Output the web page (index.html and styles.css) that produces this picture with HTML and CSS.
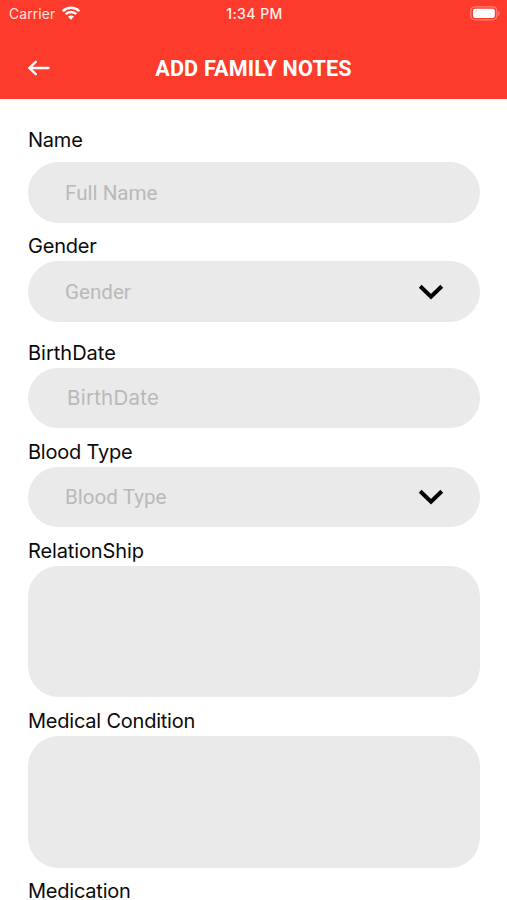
FILE: index.html
```
<!DOCTYPE html>
<html lang="en">
<head>
<meta charset="utf-8">
<title>Add Family Notes</title>
<link rel="stylesheet" href="styles.css">
</head>
<body>
<header class="header">
  <div class="status">
    <div class="carrier"><span class="carrier-name">Carrier</span>
      <svg class="wifi" width="18" height="14" viewBox="0 0 18 14" fill="none" stroke="#fff" stroke-width="2.5"><path d="M.8 5.2C5.3.7 12.7.7 17.2 5.2"/><path d="M3.7 8.2c3-2.9 7.6-2.9 10.6 0"/><path d="M6 10.6c1.8-1.6 4.2-1.6 6 0L9 13.7z" fill="#fff" stroke="none"/></svg>
    </div>
    <time class="time">1:34 PM</time>
    <svg class="battery" width="31" height="15" viewBox="0 0 31 15"><rect x=".8" y=".8" width="26" height="13" rx="4" fill="none" stroke="#ff8078" stroke-width="1.2"/><rect x="3" y="2.7" width="21.8" height="9.2" rx="1.8" fill="#fff"/><path d="M28.3 5v5c1.8-.8 1.8-4.2 0-5z" fill="#ff8a80"/></svg>
  </div>
  <div class="navbar">
    <svg class="back" width="22" height="16" viewBox="0 0 22 16" fill="none" stroke="#fff" stroke-width="2.3" stroke-linecap="round" stroke-linejoin="round"><path d="M20.7 8H1.3M7.8 1.8 1.3 8l6.5 6.2"/></svg>
    <h1 class="title">ADD FAMILY NOTES</h1>
  </div>
</header>
<main class="form">
  <section class="field name-field"><div class="label">Name</div><div class="input"><span class="hint">Full Name</span></div></section>
  <section class="field gender-field"><div class="label">Gender</div><div class="input"><span class="hint">Gender</span><svg class="chevron" width="26" height="18" viewBox="0 0 26 18" fill="none" stroke="#000" stroke-width="4"><path d="M2.2 3.2 13 13.8 23.8 3.2"/></svg></div></section>
  <section class="field"><div class="label l-birth">BirthDate</div><div class="input date"><span class="hint h-birth">BirthDate</span></div></section>
  <section class="field"><div class="label">Blood Type</div><div class="input"><span class="hint">Blood Type</span><svg class="chevron" width="26" height="18" viewBox="0 0 26 18" fill="none" stroke="#000" stroke-width="4"><path d="M2.2 3.2 13 13.8 23.8 3.2"/></svg></div></section>
  <section class="field"><div class="label l-relation">RelationShip</div><div class="input area"></div></section>
  <section class="field"><div class="label">Medical Condition</div><div class="input area"></div></section>
  <section class="last-field"><div class="label">Medication</div></section>
</main>
</body>
</html>
```
FILE: styles.css
```
* { box-sizing: border-box; }
body {
  margin: 0;
  background: #fff;
  color: #0a0a0a;
  font-family: Inter, "Liberation Sans", sans-serif;
}
.header { height: 98.5px; background: #fd3b2c; color: #fff; }
.status {
  display: grid;
  grid-template-columns: 1fr auto 1fr;
  align-items: center;
  height: 27px;
  padding: 0 7px 0 9px;
  font-size: 13.8px;
  line-height: 27px;
}
.carrier { display: flex; align-items: center; gap: 7px; color: #ffe3df; }
.carrier-name { padding-top: 2px; line-height: 25px; letter-spacing: .15px; }
.wifi { margin-top: -2px; }
.time { font-weight: 500; font-size: 14px; letter-spacing: .45px; color: #ffeeeb; }
.battery { justify-self: end; margin-right: -1px; }
.navbar {
  display: grid;
  grid-template-columns: 50px 1fr 50px;
  align-items: center;
  height: 71px;
  padding: 11px 28px 0;
}
.title {
  margin: 0;
  padding-top: 1px;
  font: 700 21.6px/30px Roboto, sans-serif;
  letter-spacing: .2px;
  text-align: center;
  white-space: nowrap;
}
.form { padding: 29.7px 27px 0 28px; }
.field { margin-bottom: 11px; }
.label {
  height: 27.5px;
  font-size: 20px;
  line-height: 26.6px;
  letter-spacing: -.22px;
  white-space: nowrap;
}
.l-birth { letter-spacing: 0; }
.l-relation { letter-spacing: -.12px; }
.name-field .label { height: 34px; line-height: 24px; }
.gender-field .label { line-height: 25.4px; }
.gender-field { margin-bottom: 18.5px; }
.last-field { height: 24px; }
.last-field .label { height: 24px; line-height: 24.8px; }
.input {
  display: flex;
  align-items: center;
  justify-content: space-between;
  height: 60.5px;
  padding: 0 36px 0 37px;
  border-radius: 30.5px;
  background: #eaeaea;
}
.date { padding-left: 39px; }
.area { height: 131.8px; }
.hint {
  padding-top: 1px;
  font: 400 20.6px/24px Roboto, sans-serif;
  color: #b9b9b9;
}
.chevron { margin-top: 1px; }
.h-birth { font: 400 20.5px/24px Inter, sans-serif; letter-spacing: .25px; }
```
